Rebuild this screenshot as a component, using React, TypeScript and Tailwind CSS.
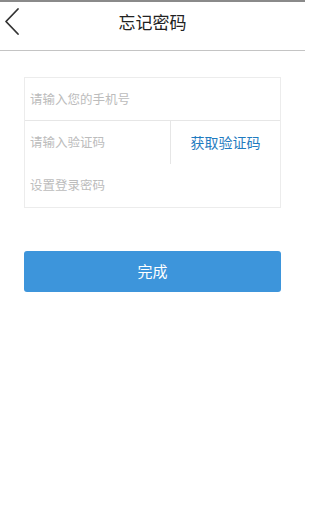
const FONT = '"Noto Sans CJK SC", "Noto Sans", sans-serif'

function BackIcon() {
  return (
    <svg width="24" height="36" viewBox="0 0 24 36" fill="none">
      <polyline
        points="18,4 6,16.5 18,29"
        stroke="#333"
        strokeWidth="1.8"
        strokeLinecap="round"
        strokeLinejoin="round"
      />
    </svg>
  )
}

export default function App() {
  return (
    <div className="w-[305px] h-[525px] bg-white" style={{ fontFamily: FONT }}>
      {/* Header */}
      <div className="h-[51px] border-t-2 border-t-[#8a8a8a] border-b border-b-[#c4c4c4] flex items-center relative">
        <button className="absolute left-0 top-[3px]">
          <BackIcon />
        </button>
        <div className="flex-1 text-center text-[17px] text-[#222] -mt-[8px]">忘记密码</div>
      </div>

      {/* Form */}
      <div className="mx-[24px] mt-[26px] border border-[#ececec] flex flex-col">
        <div className="h-[43px] border-b border-[#e6e6e6] flex items-center px-[5px]">
          <span className="text-[12.5px] text-[#bcbcbc]">请输入您的手机号</span>
        </div>
        <div className="h-[43px] flex">
          <div className="flex-1 flex items-center px-[5px]">
            <span className="text-[12.5px] text-[#bcbcbc]">请输入验证码</span>
          </div>
          <div className="w-[110px] border-l border-[#e6e6e6] flex items-center justify-center">
            <span className="text-[14px] text-[#1f7bc0]">获取验证码</span>
          </div>
        </div>
        <div className="h-[43px] flex items-center px-[5px]">
          <span className="text-[12.5px] text-[#bcbcbc]">设置登录密码</span>
        </div>
      </div>

      {/* Submit */}
      <div className="mx-[24px] mt-[43px]">
        <button className="w-full h-[41px] rounded-[3px] bg-[#3d95db] text-white text-[15px] flex items-center justify-center">
          完成
        </button>
      </div>
    </div>
  )
}
